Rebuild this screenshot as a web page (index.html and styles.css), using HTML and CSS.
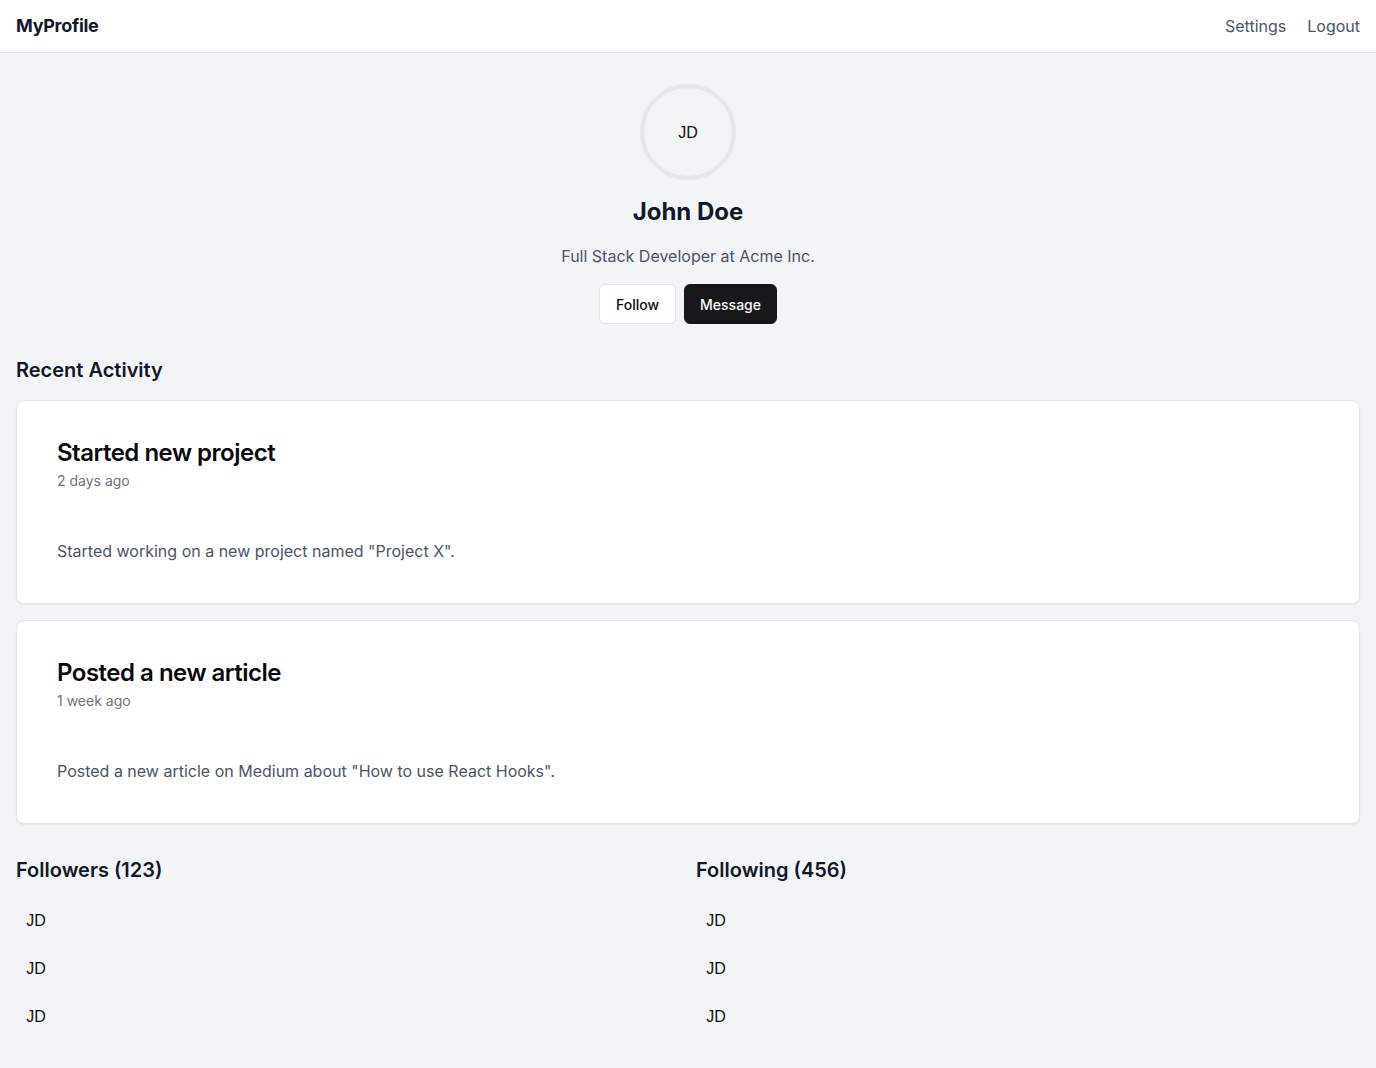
FILE: index.html
```html
<!DOCTYPE html>
<html lang="en">
<head>
<meta charset="utf-8">
<title>MyProfile</title>
<link rel="stylesheet" href="styles.css">
</head>
<body>
<header class="topbar">
  <a class="brand" href="#">MyProfile</a>
  <nav class="nav">
    <a href="#">Settings</a>
    <a href="#">Logout</a>
  </nav>
</header>
<main class="main">
  <section class="profile">
    <div class="avatar-lg"><span>JD</span></div>
    <h1 class="name">John Doe</h1>
    <p class="role">Full Stack Developer at Acme Inc.</p>
    <div class="actions">
      <button class="btn btn-outline">Follow</button>
      <button class="btn btn-dark">Message</button>
    </div>
  </section>

  <section class="activity">
    <h2 class="section-title">Recent Activity</h2>
    <div class="cards">
      <article class="card">
        <div class="card-header">
          <h3 class="card-title">Started new project</h3>
          <p class="card-desc">2 days ago</p>
        </div>
        <div class="card-content">
          <p>Started working on a new project named "Project X".</p>
        </div>
      </article>
      <article class="card">
        <div class="card-header">
          <h3 class="card-title">Posted a new article</h3>
          <p class="card-desc">1 week ago</p>
        </div>
        <div class="card-content">
          <p>Posted a new article on Medium about "How to use React Hooks".</p>
        </div>
      </article>
    </div>
  </section>

  <section class="people">
    <div class="people-col">
      <h2 class="section-title">Followers (123)</h2>
      <ul class="people-list">
        <li class="avatar-sm">JD</li>
        <li class="avatar-sm">JD</li>
        <li class="avatar-sm">JD</li>
      </ul>
    </div>
    <div class="people-col">
      <h2 class="section-title">Following (456)</h2>
      <ul class="people-list">
        <li class="avatar-sm">JD</li>
        <li class="avatar-sm">JD</li>
        <li class="avatar-sm">JD</li>
      </ul>
    </div>
  </section>
</main>
</body>
</html>
```

FILE: styles.css
```css
* { box-sizing: border-box; }
html, body { margin: 0; padding: 0; }
body {
  font-family: Inter, "Noto Sans", "Liberation Sans", sans-serif;
  background: #f3f4f6;
  color: #111827;
  min-height: 1068px;
}
a { text-decoration: none; color: inherit; }
h1, h2, h3, p { margin: 0; }

.topbar {
  height: 53px;
  background: #ffffff;
  border-bottom: 1px solid #e5e7eb;
  display: flex;
  align-items: center;
  justify-content: space-between;
  padding: 0 16px;
}
.brand {
  font-size: 18px;
  font-weight: 700;
  letter-spacing: -0.3px;
  color: #111827;
  line-height: 28px;
}
.nav {
  display: flex;
  gap: 21px;
}
.nav a {
  font-size: 16px;
  color: #4b5563;
  line-height: 24px;
}

.main {
  padding: 31px 16px 40px;
}

.profile {
  display: flex;
  flex-direction: column;
  align-items: center;
  gap: 16px;
}
.avatar-lg {
  width: 96px;
  height: 96px;
  border-radius: 50%;
  border: 4px solid #e5e7eb;
  display: flex;
  align-items: center;
  justify-content: center;
  padding-top: 2px;
  font-family: "Liberation Sans", Arial, sans-serif;
  font-size: 16px;
  color: #111111;
}
.name {
  font-size: 24px;
  line-height: 32px;
  font-weight: 700;
  color: #111827;
}
.role {
  font-size: 16px;
  line-height: 24px;
  color: #4b5563;
}
.actions {
  display: flex;
  gap: 8px;
}
.btn {
  height: 40px;
  padding: 0 16px;
  border-radius: 6px;
  font-family: Inter, sans-serif;
  font-size: 14px;
  font-weight: 500;
  cursor: pointer;
}
.btn-outline {
  background: #ffffff;
  border: 1px solid #e4e4e7;
  color: #09090b;
}
.btn-dark {
  background: #18181b;
  border: 1px solid #18181b;
  color: #fafafa;
  padding: 0 15px;
}

.activity {
  margin-top: 32px;
}
.section-title {
  font-size: 20px;
  line-height: 28px;
  font-weight: 600;
  color: #111827;
}
.cards {
  margin-top: 16px;
  display: flex;
  flex-direction: column;
  gap: 16px;
}
.card {
  background: #ffffff;
  border: 1px solid #e4e4e7;
  border-radius: 8px;
  box-shadow: 0 1px 2px rgba(0,0,0,0.05);
  padding: 16px;
}
.card-header {
  padding: 24px 24px 24px;
  display: flex;
  flex-direction: column;
  gap: 6px;
}
.card-title {
  font-size: 24px;
  line-height: 24px;
  font-weight: 600;
  letter-spacing: -0.5px;
  color: #09090b;
}
.card-desc {
  font-size: 14px;
  line-height: 20px;
  color: #71717a;
}
.card-content {
  padding: 24px;
}
.card-content p {
  font-size: 16px;
  line-height: 24px;
  color: #4b5563;
}

.people {
  margin-top: 32px;
  display: grid;
  grid-template-columns: 1fr 1fr;
  gap: 16px;
}
.people-list {
  list-style: none;
  margin: 16px 0 0;
  padding: 0;
  display: flex;
  flex-direction: column;
  gap: 8px;
}
.avatar-sm {
  width: 40px;
  height: 40px;
  border-radius: 50%;
  display: flex;
  align-items: center;
  justify-content: center;
  padding-top: 2px;
  font-family: "Liberation Sans", Arial, sans-serif;
  font-size: 16px;
  color: #111111;
}
```
